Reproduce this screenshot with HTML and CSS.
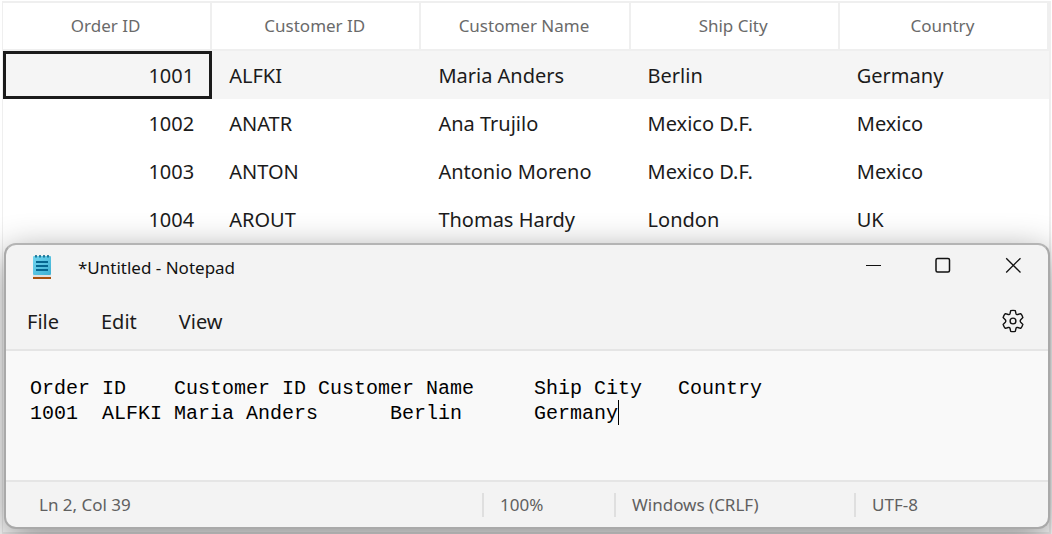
FILE: index.html
```html
<!DOCTYPE html>
<html lang="en">
<head>
<meta charset="utf-8">
<title>Orders</title>
<link rel="stylesheet" href="styles.css">
</head>
<body>
<main class="desktop">
  <div class="grid-frame">
    <table class="grid">
      <thead>
        <tr><th scope="col">Order ID</th><th scope="col">Customer ID</th><th scope="col">Customer Name</th><th scope="col">Ship City</th><th scope="col">Country</th></tr>
      </thead>
      <tbody>
        <tr class="row-selected"><td class="num cell-current">1001</td><td>ALFKI</td><td>Maria Anders</td><td>Berlin</td><td>Germany</td></tr>
        <tr><td class="num">1002</td><td>ANATR</td><td>Ana Trujilo</td><td>Mexico D.F.</td><td>Mexico</td></tr>
        <tr><td class="num">1003</td><td>ANTON</td><td>Antonio Moreno</td><td>Mexico D.F.</td><td>Mexico</td></tr>
        <tr><td class="num">1004</td><td>AROUT</td><td>Thomas Hardy</td><td>London</td><td>UK</td></tr>
      </tbody>
    </table>
  </div>

  <section class="notepad" aria-label="Notepad">
    <header class="titlebar">
      <svg class="app-icon" viewBox="0 0 20 26" aria-hidden="true">
        <defs><linearGradient id="pad" x1="0" y1="0" x2="1" y2="1"><stop offset="0" stop-color="#71d5f0"/><stop offset="1" stop-color="#3eb0d2"/></linearGradient></defs>
        <rect x="1" y="23" width="18" height="2" fill="#a84f0b"/>
        <rect x="1" y="21" width="18" height="2" fill="#e3e0dd"/>
        <rect x="1" y="2" width="18" height="19" rx="1" fill="url(#pad)"/>
        <path d="M4 1v2.5M8 1v2.5M12 1v2.5M16 1v2.5" stroke="#0a6488" stroke-width="1.6"/>
        <path d="M4 8h12M4 12h12M4 16h12" stroke="#05668f" stroke-width="1.8"/>
      </svg>
      <span class="title">*Untitled - Notepad</span>
      <button class="tool" type="button" aria-label="Minimize"><svg viewBox="0 0 16 16"><path d="M1 8.5h15" stroke-width="1"/></svg></button>
      <button class="tool" type="button" aria-label="Maximize"><svg viewBox="0 0 16 16"><rect x="1" y="1.5" width="13.5" height="13.5" rx="1.5" stroke-width="1.5"/></svg></button>
      <button class="tool" type="button" aria-label="Close"><svg viewBox="0 0 16 16"><path d="M1.2 1.2l14.3 14.3M15.5 1.2L1.2 15.5" stroke-width="1.3"/></svg></button>
    </header>
    <nav class="menubar">
      <button class="menu" type="button">File</button>
      <button class="menu" type="button">Edit</button>
      <button class="menu" type="button">View</button>
      <button class="tool settings" type="button" aria-label="Settings">
        <svg class="gear" viewBox="0 0 24 24"><path d="M9.7 1.7Q12 1 14.3 1.7L15 4.7Q15.4 5.9 16.7 5.5L19.6 4.6Q21.3 6.3 21.9 8.6L19.7 10.7Q18.7 12 19.7 13.3L21.9 15.4Q21.3 17.7 19.6 19.4L16.7 18.5Q15.4 18.1 15 19.3L14.3 22.3Q12 23 9.7 22.3L9 19.3Q8.6 18.1 7.3 18.5L4.4 19.4Q2.7 17.7 2.1 15.4L4.3 13.3Q5.3 12 4.3 10.7L2.1 8.6Q2.7 6.3 4.4 4.6L7.3 5.5Q8.6 5.9 9 4.7Z" stroke-width="1.4" stroke-linejoin="round"/><circle cx="12" cy="12" r="2.9" stroke-width="1.4"/></svg>
      </button>
    </nav>
    <div class="editor">
      <textarea class="text" aria-label="Text editor" rows="4" wrap="off" spellcheck="false">Order ID&#9;Customer ID&#9;Customer Name&#9;Ship City&#9;Country
1001&#9;ALFKI&#9;Maria Anders&#9;Berlin&#9;Germany</textarea>
      <span class="caret"></span>
    </div>
    <footer class="status">
      <span>Ln 2, Col 39</span>
      <span>100%</span>
      <span>Windows (CRLF)</span>
      <span>UTF-8</span>
    </footer>
  </section>
</main>
</body>
</html>
```
FILE: styles.css
```css
* { box-sizing: border-box; }
body {
  margin: 0;
  background: #fff;
  font-family: "Noto Sans", "Open Sans", sans-serif;
  color: #1b1b1b;
}
.desktop {
  position: relative;
  min-height: 100vh;
  padding: 1px 1px 0 2px;
  display: flex;
  overflow: hidden;
}
.grid-frame {
  flex: 1;
  border: 2px solid #efefef;
  border-width: 2px 2px 2px 1px;
}
.grid {
  width: 100%;
  table-layout: fixed;
  border-collapse: separate;
  border-spacing: 0;
}
.grid th {
  height: 48px;
  padding: 0 2px 2px 0;
  border-right: 2px solid #efefef;
  border-bottom: 2px solid #efefef;
  font-size: 17px;
  font-weight: 400;
  color: #6a6a6a;
}
.grid td {
  height: 48px;
  padding: 0 18px 0 17px;
  font-size: 20px;
  white-space: nowrap;
}
.grid .num { text-align: right; }
.row-selected { background: #f5f5f5; }
.grid .cell-current {
  outline: 3px solid #1b1b1b;
  outline-offset: -3px;
}

.notepad {
  position: absolute;
  top: 243px;
  left: 4px;
  right: 2px;
  border: 2px solid #a9a9a9;
  border-top-color: #b4b4b4;
  border-radius: 12px;
  background: #f3f3f3;
  box-shadow: 0 10px 36px rgba(0, 0, 0, .45);
  overflow: hidden;
}
button {
  border: 0;
  padding: 0;
  background: none;
  font: inherit;
  color: inherit;
}
.titlebar {
  display: flex;
  align-items: center;
  height: 44px;
  padding-left: 26px;
  font-size: 17px;
}
.app-icon { width: 20px; height: 26px; }
.title { margin-left: 26px; margin-right: auto; color: #111; }
.tool {
  display: grid;
  place-items: center;
  width: 70px;
  height: 40px;
}
.titlebar .tool { align-self: flex-start; }
.tool svg {
  width: 16px;
  height: 16px;
  fill: none;
  stroke: #111;
}
.tool .gear { width: 24px; height: 24px; }
.menubar {
  display: flex;
  align-items: center;
  gap: 42px;
  height: 62px;
  padding-top: 4px;
  padding-left: 21px;
  border-bottom: 2px solid #e5e5e5;
  font-size: 20px;
}
.settings { margin-left: auto; }
.editor {
  position: relative;
  background: #f9f9f9;
  border-bottom: 2px solid #e5e5e5;
}
.text {
  display: block;
  width: 100%;
  height: 129px;
  padding: 25px 24px;
  border: 0;
  outline: 0;
  resize: none;
  overflow: hidden;
  background: transparent;
  color: #000;
  font: 20px/25px "Liberation Mono", monospace;
  tab-size: 6;
}
.caret {
  position: absolute;
  top: 49px;
  left: 612px;
  width: 1px;
  height: 25px;
  background: #000;
}
.status {
  display: grid;
  grid-template-columns: 476fr 132fr 240fr 194fr;
  align-items: center;
  height: 45px;
  font-size: 17px;
  color: #606060;
}
.status span {
  padding-left: 16px;
  border-left: 2px solid #dfdfdf;
  line-height: 24px;
}
.status span:first-child { padding-left: 33px; border-left: 0; }
```
